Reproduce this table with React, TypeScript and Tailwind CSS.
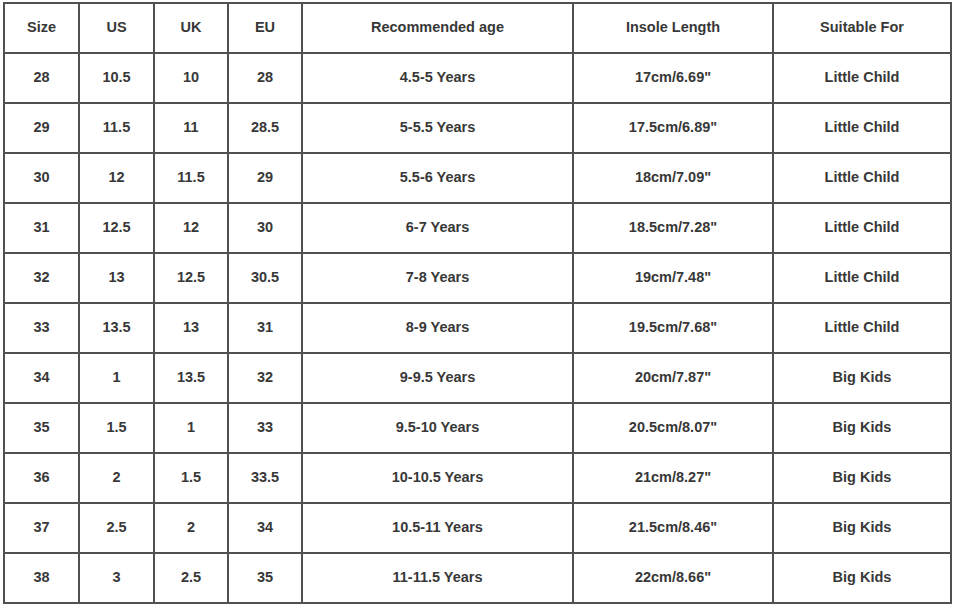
const headers = ['Size', 'US', 'UK', 'EU', 'Recommended age', 'Insole Length', 'Suitable For'];

const rows = [
  ['28', '10.5', '10', '28', '4.5-5 Years', '17cm/6.69"', 'Little Child'],
  ['29', '11.5', '11', '28.5', '5-5.5 Years', '17.5cm/6.89"', 'Little Child'],
  ['30', '12', '11.5', '29', '5.5-6 Years', '18cm/7.09"', 'Little Child'],
  ['31', '12.5', '12', '30', '6-7 Years', '18.5cm/7.28"', 'Little Child'],
  ['32', '13', '12.5', '30.5', '7-8 Years', '19cm/7.48"', 'Little Child'],
  ['33', '13.5', '13', '31', '8-9 Years', '19.5cm/7.68"', 'Little Child'],
  ['34', '1', '13.5', '32', '9-9.5 Years', '20cm/7.87"', 'Big Kids'],
  ['35', '1.5', '1', '33', '9.5-10 Years', '20.5cm/8.07"', 'Big Kids'],
  ['36', '2', '1.5', '33.5', '10-10.5 Years', '21cm/8.27"', 'Big Kids'],
  ['37', '2.5', '2', '34', '10.5-11 Years', '21.5cm/8.46"', 'Big Kids'],
  ['38', '3', '2.5', '35', '11-11.5 Years', '22cm/8.66"', 'Big Kids'],
];

export default function App() {
  return (
    <div className="w-[956px] h-[607px] bg-white pl-[3px] pt-[2px]" style={{ fontFamily: '"Liberation Sans", Arial, sans-serif' }}>
      <div className="inline-grid grid-cols-[73px_73px_72px_72px_269px_198px_176px] auto-rows-[48px] gap-[2px] p-[2px] bg-[#505050]">
        {[headers, ...rows].map((row, r) =>
          row.map((cell, c) => (
            <div key={`${r}-${c}`} className="bg-white flex items-center justify-center pb-[1px] text-[14.5px] font-bold text-[#383838]">
              {cell}
            </div>
          ))
        )}
      </div>
    </div>
  );
}
